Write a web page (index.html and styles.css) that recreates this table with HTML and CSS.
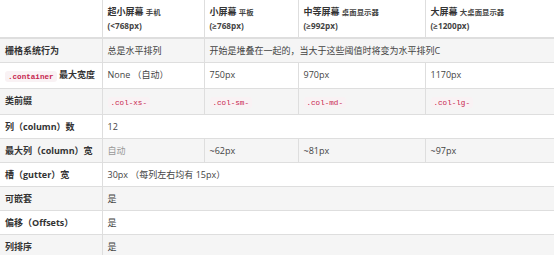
FILE: index.html
```html
<!DOCTYPE html>
<html lang="zh-CN">
<head>
<meta charset="utf-8">
<title>栅格参数</title>
<link rel="stylesheet" href="styles.css">
</head>
<body>
<table class="grid-table">
  <colgroup>
    <col class="c1"><col class="c2"><col class="c3"><col class="c4"><col class="c5">
  </colgroup>
  <thead>
    <tr>
      <th></th>
      <th>超小屏幕 <small>手机</small><br><span class="bp">(&lt;768px)</span></th>
      <th>小屏幕 <small>平板</small><br><span class="bp">(≥768px)</span></th>
      <th>中等屏幕 <small>桌面显示器</small><br><span class="bp">(≥992px)</span></th>
      <th>大屏幕 <small>大桌面显示器</small><br><span class="bp">(≥1200px)</span></th>
    </tr>
  </thead>
  <tbody>
    <tr>
      <th>栅格系统行为</th>
      <td>总是水平排列</td>
      <td colspan="3">开始是堆叠在一起的，当大于这些阈值时将变为水平排列C</td>
    </tr>
    <tr>
      <th><code>.container</code> 最大宽度</th>
      <td>None （自动）</td>
      <td>750px</td>
      <td>970px</td>
      <td>1170px</td>
    </tr>
    <tr>
      <th>类前缀</th>
      <td><code>.col-xs-</code></td>
      <td><code>.col-sm-</code></td>
      <td><code>.col-md-</code></td>
      <td><code>.col-lg-</code></td>
    </tr>
    <tr>
      <th>列（column）数</th>
      <td colspan="4">12</td>
    </tr>
    <tr>
      <th>最大列（column）宽</th>
      <td class="muted">自动</td>
      <td>~62px</td>
      <td>~81px</td>
      <td>~97px</td>
    </tr>
    <tr>
      <th>槽（gutter）宽</th>
      <td colspan="4">30px （每列左右均有 15px）</td>
    </tr>
    <tr>
      <th>可嵌套</th>
      <td colspan="4">是</td>
    </tr>
    <tr>
      <th>偏移（Offsets）</th>
      <td colspan="4">是</td>
    </tr>
    <tr>
      <th>列排序</th>
      <td colspan="4">是</td>
    </tr>
  </tbody>
</table>
</body>
</html>
```
FILE: styles.css
```css
html, body {
  margin: 0;
  padding: 0;
  background: #fff;
}
body {
  font-family: "Open Sans", "Noto Sans CJK SC", sans-serif;
  font-size: 9px;
  line-height: 13px;
  color: #444;
}
.grid-table {
  width: 554px;
  border-collapse: collapse;
  table-layout: fixed;
}
.c1 { width: 102px; }
.c2 { width: 102px; }
.c3 { width: 94px; }
.c4 { width: 127px; }
.c5 { width: 129px; }
.grid-table th,
.grid-table td {
  padding: 5px 5px;
  text-align: left;
  vertical-align: top;
  border: 1px solid #dedede;
  white-space: nowrap;
}
.grid-table tr > :first-child { border-left: 0; }
.grid-table tr > :last-child { border-right: 0; }
.grid-table thead th {
  border-top: 0;
  border-bottom: 2px solid #dedede;
  font-weight: bold;
  color: #333;
}
.grid-table thead small {
  font-size: 7.4px;
  font-weight: bold;
  color: #444;
}
.grid-table .bp {
  font-size: 8.2px;
  font-weight: bold;
  color: #444;
}
.grid-table tbody th {
  font-weight: bold;
  color: #333;
}
.grid-table tbody tr:nth-child(odd) {
  background: #f5f5f5;
}
.grid-table .muted {
  color: #999;
}
code {
  font-family: "Liberation Mono", "DejaVu Sans Mono", monospace;
  font-size: 7.6px;
  padding: 1.5px 3px;
  color: #c7254e;
  background: #f9f2f4;
  border-radius: 3px;
}
```
